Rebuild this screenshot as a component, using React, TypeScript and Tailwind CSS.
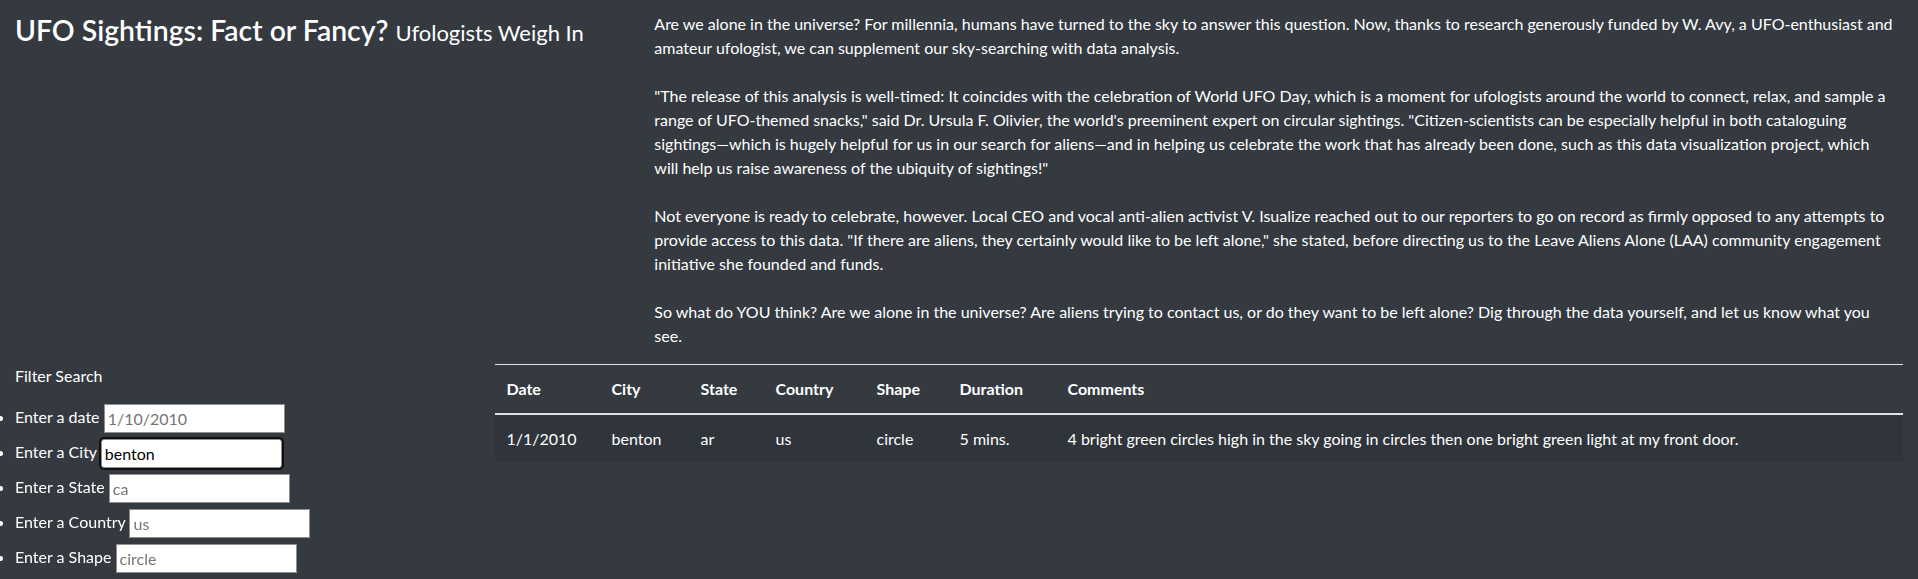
import React from "react";

const font = { fontFamily: "Lato, 'Noto Sans', sans-serif" };

const p1 = [
  "Are we alone in the universe? For millennia, humans have turned to the sky to answer this question. Now, thanks to research generously funded by W. Avy, a UFO-enthusiast and",
  "amateur ufologist, we can supplement our sky-searching with data analysis.",
];
const p2 = [
  "\"The release of this analysis is well-timed: It coincides with the celebration of World UFO Day, which is a moment for ufologists around the world to connect, relax, and sample a",
  "range of UFO-themed snacks,\" said Dr. Ursula F. Olivier, the world's preeminent expert on circular sightings. \"Citizen-scientists can be especially helpful in both cataloguing",
  "sightings\u2014which is hugely helpful for us in our search for aliens\u2014and in helping us celebrate the work that has already been done, such as this data visualization project, which",
  "will help us raise awareness of the ubiquity of sightings!\"",
];
const p3 = [
  "Not everyone is ready to celebrate, however. Local CEO and vocal anti-alien activist V. Isualize reached out to our reporters to go on record as firmly opposed to any attempts to",
  "provide access to this data. \"If there are aliens, they certainly would like to be left alone,\" she stated, before directing us to the Leave Aliens Alone (LAA) community engagement",
  "initiative she founded and funds.",
];
const p4 = [
  "So what do YOU think? Are we alone in the universe? Are aliens trying to contact us, or do they want to be left alone? Dig through the data yourself, and let us know what you",
  "see.",
];

function Para({ lines }: { lines: string[] }) {
  return (
    <p className="leading-6 whitespace-nowrap">
      {lines.map((l, i) => (
        <React.Fragment key={i}>
          {l}
          {i < lines.length - 1 && <br />}
        </React.Fragment>
      ))}
    </p>
  );
}

const filters = [
  { label: "Enter a date", ph: "1/10/2010" },
  { label: "Enter a City", ph: "", value: "benton" },
  { label: "Enter a State", ph: "ca" },
  { label: "Enter a Country", ph: "us" },
  { label: "Enter a Shape", ph: "circle" },
];

const headers = [
  { t: "Date", w: "w-[105px]" },
  { t: "City", w: "w-[89px]" },
  { t: "State", w: "w-[75px]" },
  { t: "Country", w: "w-[101px]" },
  { t: "Shape", w: "w-[83px]" },
  { t: "Duration", w: "w-[108px]" },
  { t: "Comments", w: "" },
];

const row = [
  "1/1/2010",
  "benton",
  "ar",
  "us",
  "circle",
  "5 mins.",
  "4 bright green circles high in the sky going in circles then one bright green light at my front door.",
];

export default function App() {
  return (
    <div className="min-h-[579px] w-full bg-[#343a40] text-white text-base pt-3" style={font}>
      <div className="flex">
        <div className="w-1/3 px-[15px]">
          <h3 className="text-[28.4px] leading-[1.2] font-semibold mt-[1px]">
            UFO Sightings: Fact or Fancy?{" "}
            <small className="text-[22px] font-normal">Ufologists Weigh In</small>
          </h3>
        </div>
        <div className="w-2/3 px-[15px] mb-4 flex flex-col gap-6">
          <Para lines={p1} />
          <Para lines={p2} />
          <Para lines={p3} />
          <Para lines={p4} />
        </div>
      </div>
      <div className="flex">
        <div className="w-1/4 px-[15px]">
          <div className="leading-6">Filter Search</div>
          <ul className="list-none pl-0 mt-[11px]">
            {filters.map((f, i) => (
              <li key={i} className="h-[35px] leading-[35px] whitespace-nowrap">
                <span className="inline-block align-middle w-[5px] h-[5px] rounded-full bg-white -ml-[17px] mr-[12px]" />
                <label>{f.label}</label>{" "}
                <input
                  type="text"
                  placeholder={f.ph}
                  defaultValue={f.value}
                  autoFocus={!!f.value}
                  className={
                    "align-middle w-[181px] h-[29px] bg-white text-black text-base leading-6 pl-[3px] border border-[#8f8f8f] placeholder:text-[#757575] " +
                    (f.value
                      ? "outline-2 outline-[#101010] rounded-[3px] focus:outline-2 focus:outline-[#101010]"
                      : "")
                  }
                  style={font}
                />
              </li>
            ))}
          </ul>
        </div>
        <div className="w-3/4 px-[15px]">
          <table className="w-full table-fixed border-collapse">
            <colgroup>
              {headers.map((h, i) => (
                <col key={i} className={h.w} />
              ))}
            </colgroup>
            <thead>
              <tr>
                {headers.map((h, i) => (
                  <th
                    key={i}
                    className="text-left font-bold px-3 py-3 leading-6 border-t border-t-[#dee2e6] border-b-2 border-b-[#dee2e6]"
                  >
                    {h.t}
                  </th>
                ))}
              </tr>
            </thead>
            <tbody>
              <tr className="bg-[#30353b]">
                {row.map((c, i) => (
                  <td key={i} className="px-3 pt-3 pb-[11px] leading-6 whitespace-nowrap">
                    {c}
                  </td>
                ))}
              </tr>
            </tbody>
          </table>
        </div>
      </div>
    </div>
  );
}
